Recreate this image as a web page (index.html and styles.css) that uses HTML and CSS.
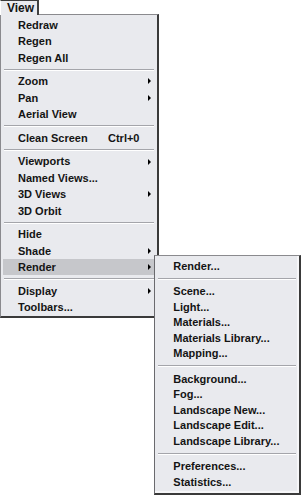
FILE: index.html
```html
<!DOCTYPE html>
<html>
<head>
<meta charset="utf-8">
<link rel="stylesheet" href="styles.css">
</head>
<body>
<div class="tab">View</div>
<div class="menu">
  <div class="item">Redraw</div>
  <div class="item">Regen</div>
  <div class="item">Regen All</div>
  <div class="sep"></div>
  <div class="item"><span>Zoom</span><span class="arrow"></span></div>
  <div class="item"><span>Pan</span><span class="arrow"></span></div>
  <div class="item">Aerial View</div>
  <div class="sep"></div>
  <div class="item"><span class="label">Clean Screen</span><span class="key">Ctrl+0</span></div>
  <div class="sep"></div>
  <div class="item"><span>Viewports</span><span class="arrow"></span></div>
  <div class="item">Named Views...</div>
  <div class="item"><span>3D Views</span><span class="arrow"></span></div>
  <div class="item">3D Orbit</div>
  <div class="sep"></div>
  <div class="item">Hide</div>
  <div class="item"><span>Shade</span><span class="arrow"></span></div>
  <div class="item active"><span>Render</span><span class="arrow"></span></div>
  <div class="sep"></div>
  <div class="item"><span>Display</span><span class="arrow"></span></div>
  <div class="item">Toolbars...</div>
</div>
<div class="submenu">
  <div class="sitem">Render...</div>
  <div class="ssep"></div>
  <div class="sitem">Scene...</div>
  <div class="sitem">Light...</div>
  <div class="sitem">Materials...</div>
  <div class="sitem">Materials Library...</div>
  <div class="sitem">Mapping...</div>
  <div class="ssep"></div>
  <div class="sitem">Background...</div>
  <div class="sitem">Fog...</div>
  <div class="sitem">Landscape New...</div>
  <div class="sitem">Landscape Edit...</div>
  <div class="sitem">Landscape Library...</div>
  <div class="ssep"></div>
  <div class="sitem">Preferences...</div>
  <div class="sitem">Statistics...</div>
</div>
</body>
</html>
```
FILE: styles.css
```css
html, body {
  margin: 0;
  padding: 0;
  background: #ffffff;
}
body {
  position: relative;
  width: 302px;
  height: 496px;
  overflow: hidden;
  font-family: "Liberation Sans", Arial, sans-serif;
  font-weight: bold;
  font-size: 11px;
  color: #141414;
}
.tab {
  position: relative;
  z-index: 1;
  box-sizing: border-box;
  width: 39px;
  height: 15px;
  margin-bottom: -1px;
  padding-left: 6px;
  line-height: 14px;
  font-size: 12px;
  background: #e9eaee;
  border-top: 1px solid #3c3c3c;
  border-left: 1px solid #ffffff;
  border-right: 2px solid #404040;
}
.menu {
  box-sizing: border-box;
  width: 159px;
  display: flex;
  flex-direction: column;
  padding: 1.8px 2px 0.3px 2px;
  background: #e9eaee;
  border-top: 1px solid #8a8a8e;
  border-left: 1px solid #8a8a8e;
  border-right: 2px solid #3a3a3a;
  border-bottom: 2px solid #3a3a3a;
}
.item {
  height: 16.4px;
  line-height: 16.4px;
  padding: 0 4px 0 15px;
  display: flex;
  align-items: center;
  justify-content: space-between;
  white-space: nowrap;
}
.item.active {
  background: #c6c7cb;
}
.label {
  width: 90px;
}
.key {
  margin-right: auto;
}
.arrow {
  width: 0;
  height: 0;
  border-left: 3px solid #000000;
  border-top: 3px solid transparent;
  border-bottom: 3px solid transparent;
}
.sep {
  margin: 2.7px 1px 2.6px 1px;
  height: 0;
  border-top: 1px solid #a4a5aa;
  border-bottom: 1px solid #ffffff;
}
.submenu {
  position: absolute;
  left: 154px;
  top: 255px;
  box-sizing: border-box;
  width: 147px;
  height: 240px;
  display: flex;
  flex-direction: column;
  padding: 2.9px 2px 0 2px;
  background: #e9eaee;
  border-top: 1px solid #8a8a8e;
  border-left: 1px solid #6a6a6e;
  border-right: 2px solid #3a3a3a;
  border-bottom: 2px solid #3a3a3a;
  box-shadow: inset -2px -2px 0 #f6f6f8;
}
.sitem {
  height: 15.5px;
  line-height: 15.5px;
  padding-left: 16.3px;
  white-space: nowrap;
}
.ssep {
  margin: 3.5px 1px 4.5px 1px;
  height: 0;
  border-top: 1px solid #a4a5aa;
  border-bottom: 1px solid #ffffff;
}
```
